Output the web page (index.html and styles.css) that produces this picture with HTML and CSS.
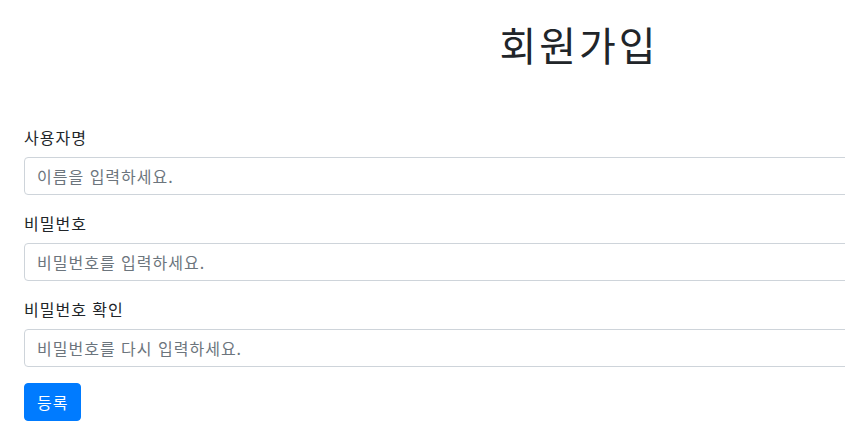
FILE: index.html
```html
<!DOCTYPE html>
<html lang="ko">
<head>
<meta charset="utf-8">
<title>회원가입</title>
<link rel="stylesheet" href="styles.css">
</head>
<body>
<div class="container">
  <h1 class="title">회원가입</h1>
  <form class="form">
    <div class="form-group">
      <label class="label" for="username">사용자명</label>
      <input class="input" id="username" type="text" placeholder="이름을 입력하세요.">
    </div>
    <div class="form-group">
      <label class="label" for="password">비밀번호</label>
      <input class="input" id="password" type="password" placeholder="비밀번호를 입력하세요.">
    </div>
    <div class="form-group">
      <label class="label" for="password2">비밀번호 확인</label>
      <input class="input" id="password2" type="password" placeholder="비밀번호를 다시 입력하세요.">
    </div>
    <button class="btn" type="button">등록</button>
  </form>
</div>
</body>
</html>
```
FILE: styles.css
```css
* { box-sizing: border-box; }
html, body { margin: 0; padding: 0; }
body {
  font-family: "Noto Sans CJK KR", "Noto Sans", "Liberation Sans", sans-serif;
  font-size: 16px;
  line-height: 1.5;
  color: #212529;
  background: #fff;
  overflow: hidden;
  letter-spacing: 1px;
}
.container {
  width: 1110px;
  margin-left: 24px;
}
.title {
  margin: 20px 0 57px;
  font-size: 40px;
  font-weight: 400;
  line-height: 1.2;
  letter-spacing: 3px;
  text-align: center;
}
.form-group {
  display: flex;
  flex-direction: column;
  margin-bottom: 16px;
}
.label {
  margin-bottom: 8px;
  line-height: 24px;
}
.input {
  display: block;
  width: 100%;
  height: 38px;
  padding: 6px 12px;
  font-family: inherit;
  font-size: 16px;
  line-height: 1.5;
  letter-spacing: 1px;
  color: #495057;
  background: #fff;
  border: 1px solid #ced4da;
  border-radius: 4px;
}
.input::placeholder { color: #6c757d; opacity: 1; }
.btn {
  display: inline-block;
  height: 38px;
  padding: 6px 12px;
  font-family: inherit;
  font-size: 16px;
  line-height: 1.5;
  letter-spacing: 1px;
  color: #fff;
  background: #007bff;
  border: 1px solid #007bff;
  border-radius: 4px;
}
```
